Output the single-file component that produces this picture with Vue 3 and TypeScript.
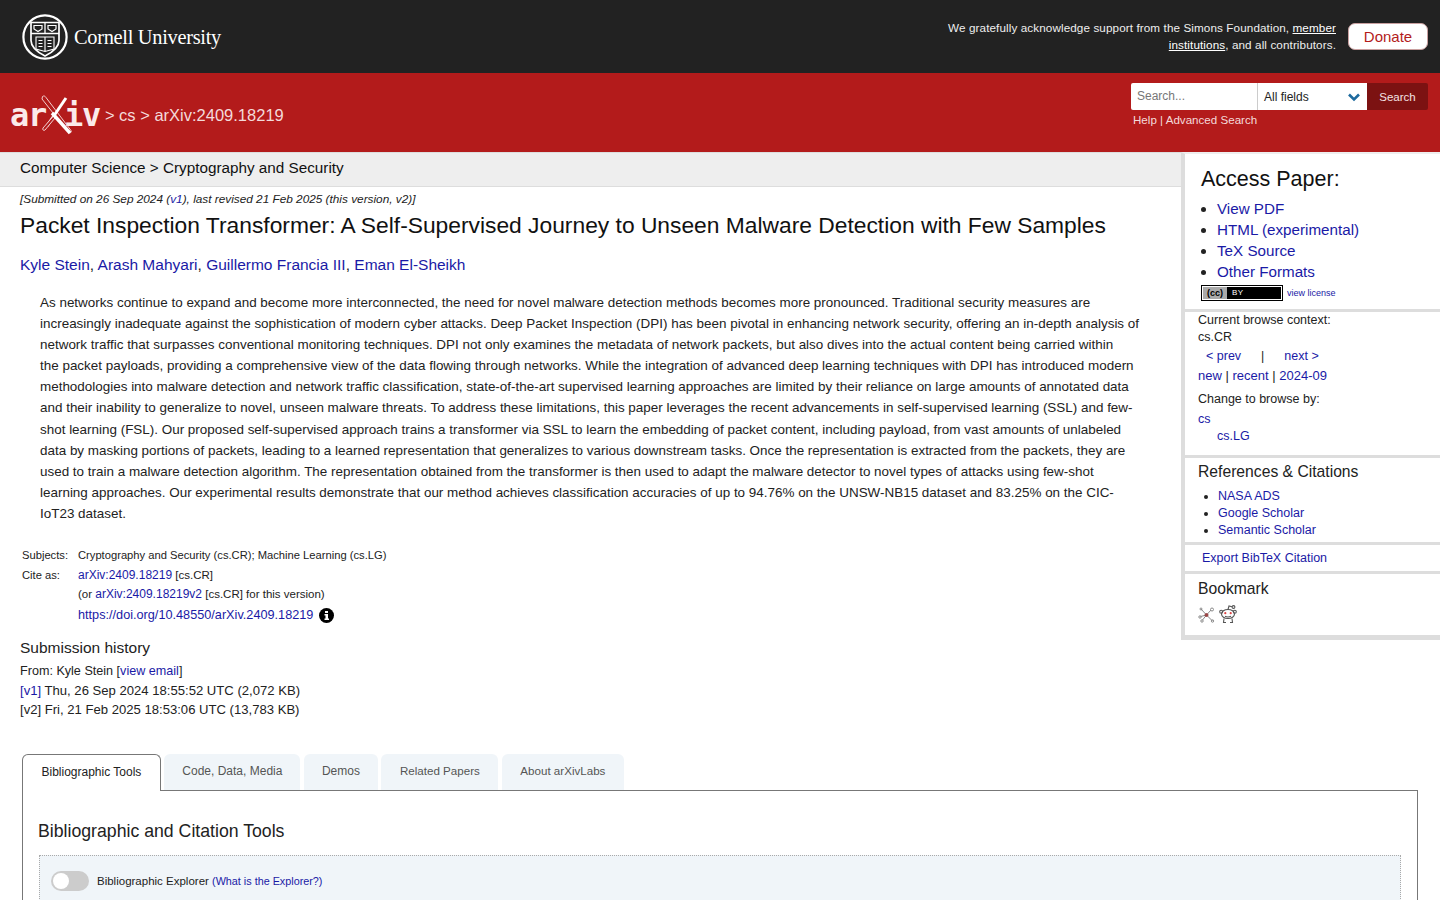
<script setup lang="ts">
const absLines = [
  'As networks continue to expand and become more interconnected, the need for novel malware detection methods becomes more pronounced. Traditional security measures are',
  'increasingly inadequate against the sophistication of modern cyber attacks. Deep Packet Inspection (DPI) has been pivotal in enhancing network security, offering an in-depth analysis of',
  'network traffic that surpasses conventional monitoring techniques. DPI not only examines the metadata of network packets, but also dives into the actual content being carried within',
  'the packet payloads, providing a comprehensive view of the data flowing through networks. While the integration of advanced deep learning techniques with DPI has introduced modern',
  'methodologies into malware detection and network traffic classification, state-of-the-art supervised learning approaches are limited by their reliance on large amounts of annotated data',
  'and their inability to generalize to novel, unseen malware threats. To address these limitations, this paper leverages the recent advancements in self-supervised learning (SSL) and few-',
  'shot learning (FSL). Our proposed self-supervised approach trains a transformer via SSL to learn the embedding of packet content, including payload, from vast amounts of unlabeled',
  'data by masking portions of packets, leading to a learned representation that generalizes to various downstream tasks. Once the representation is extracted from the packets, they are',
  'used to train a malware detection algorithm. The representation obtained from the transformer is then used to adapt the malware detector to novel types of attacks using few-shot',
  'learning approaches. Our experimental results demonstrate that our method achieves classification accuracies of up to 94.76% on the UNSW-NB15 dataset and 83.25% on the CIC-',
  'IoT23 dataset.'
]
const authors = ['Kyle Stein', 'Arash Mahyari', 'Guillermo Francia III', 'Eman El-Sheikh']
const tabs = ['Code, Data, Media', 'Demos', 'Related Papers', 'About arXivLabs']
const accessLinks = ['View PDF', 'HTML (experimental)', 'TeX Source', 'Other Formats']
const refLinks = ['NASA ADS', 'Google Scholar', 'Semantic Scholar']
</script>

<template>
  <div class="page">
    <header class="cornell">
      <div class="cornell-logo">
        <svg width="46" height="46" viewBox="0 0 46 46" fill="none" stroke="#fff">
          <circle cx="23" cy="23" r="21.6" stroke-width="2.2" />
          <path d="M9 8.500h28v18c0 7-6 11.500-14 15.500-8-4-14-8.500-14-15.500z" stroke-width="1.700" />
          <path d="M9 19.500h28M23 8.500v11" stroke-width="1.300" />
          <path d="M12 11.500h8v3.500l-4 2.500-4-2.500zM26 11.500h8v3.500l-4 2.500-4-2.500z" stroke-width="1.200" />
          <path d="M14 23h18v12l-9 2.500-9-2.500zM23 23v14.500M16.500 26.500h4M16.500 29.500h4M16.500 32.500h4M25.500 26.500h4M25.500 29.500h4M25.500 32.500h4" stroke-width="1.100" />
        </svg>
        <span class="cornell-name">Cornell University</span>
      </div>
      <div class="support">
        <p>We gratefully acknowledge support from the Simons Foundation, <a>member<br>institutions</a>, and all contributors.</p>
        <a class="donate">Donate</a>
      </div>
    </header>

    <div class="redbar">
      <div class="crumbs">
        <div class="arxiv-logo">
          <span>ar</span>
          <svg width="34" height="40" viewBox="0 0 34 40" fill="none">
            <path d="M2.500 1.500c1.500-1 2.500-.5 3.500 1l25 33c1 2-1 3-2.500 2L2 4z" stroke="#f3d0d0" stroke-width="1" />
            <path d="M7 31L26 3" stroke="#fff" stroke-width="3" />
            <path d="M3 33c-1 2 1 3 2 2l10-12-1.500-2z" stroke="#f3d0d0" stroke-width="1" fill="#b31b1b" />
            <path d="M12 18l18 20" stroke="#fff" stroke-width="3.400" />
          </svg>
          <span>iv</span>
        </div>
        <span class="crumb-text">&gt; cs &gt; arXiv:2409.18219</span>
      </div>
      <div class="search">
        <div class="search-row">
          <div class="search-input">Search...</div>
          <div class="search-select">
            All fields
            <svg width="14" height="10" viewBox="0 0 14 10" fill="none"><path d="M2 2.500l5 5 5-5" stroke="#1d6a9e" stroke-width="2.600" /></svg>
          </div>
          <div class="search-btn">Search</div>
        </div>
        <div class="search-links">Help | Advanced Search</div>
      </div>
    </div>

    <div class="body-row">
      <main class="main">
        <div class="subject-bar">Computer Science &gt; Cryptography and Security</div>
        <div class="article">
          <div class="dateline">[Submitted on 26 Sep 2024 (<a>v1</a>), last revised 21 Feb 2025 (this version, v2)]</div>
          <h1 class="title">Packet Inspection Transformer: A Self-Supervised Journey to Unseen Malware Detection with Few Samples</h1>
          <div class="authors">
            <template v-for="(a, i) in authors" :key="a"><a>{{ a }}</a><span v-if="i < authors.length - 1">, </span></template>
          </div>
          <blockquote class="abstract">
            <div v-for="l in absLines" :key="l">{{ l }}</div>
          </blockquote>
          <div class="meta">
            <div class="meta-label">Subjects:</div>
            <div>Cryptography and Security (cs.CR); Machine Learning (cs.LG)</div>
            <div class="meta-label">Cite as:</div>
            <div class="cite">
              <div><a>arXiv:2409.18219</a> [cs.CR]</div>
              <div>(or <a>arXiv:2409.18219v2</a> [cs.CR] for this version)</div>
              <div class="doi">
                <a>https://doi.org/10.48550/arXiv.2409.18219</a>
                <svg width="15" height="15" viewBox="0 0 15 15"><circle cx="7.500" cy="7.500" r="7.500" fill="#000" /><path d="M6 3h3v2H6zM5.500 6H9v4.500h1V12H5.500v-1.500h1v-3h-1z" fill="#fff" /></svg>
              </div>
            </div>
          </div>
          <h2 class="history-title">Submission history</h2>
          <div class="history">
            <div class="from">From: Kyle Stein [<a>view email</a>]</div>
            <div><a>[v1]</a> Thu, 26 Sep 2024 18:55:52 UTC (2,072 KB)</div>
            <div>[v2] Fri, 21 Feb 2025 18:53:06 UTC (13,783 KB)</div>
          </div>
        </div>
      </main>

      <aside class="side">
        <section class="access">
          <h2>Access Paper:</h2>
          <ul>
            <li v-for="l in accessLinks" :key="l"><a>{{ l }}</a></li>
          </ul>
          <div class="license">
            <span class="cc"><span class="cc-mark">(cc)</span><span class="cc-by">BY</span></span>
            <a>view license</a>
          </div>
        </section>
        <section class="browse">
          <div>Current browse context:</div>
          <div>cs.CR</div>
          <div class="prevnext"><a>&lt; prev</a><span>|</span><a>next &gt;</a></div>
          <div class="newrow"><a>new</a> | <a>recent</a> | <a>2024-09</a></div>
          <div class="change">Change to browse by:</div>
          <div class="cats"><a>cs</a></div>
          <div class="cats sub"><a>cs.LG</a></div>
        </section>
        <section class="refs">
          <h3>References &amp; Citations</h3>
          <ul>
            <li v-for="l in refLinks" :key="l"><a>{{ l }}</a></li>
          </ul>
        </section>
        <section class="bibtex"><a>Export BibTeX Citation</a></section>
        <section class="bookmark">
          <h3>Bookmark</h3>
          <div class="bm-icons">
            <svg width="17" height="16" viewBox="0 0 17 16" fill="none" stroke="#8a8a8a" stroke-width="1">
              <path d="M3 2l5.500 6L13 3M2.500 9.500L8.500 8l6 6M8.500 8l-4 5" />
              <circle cx="3" cy="2" r="1" /><circle cx="14" cy="2.500" r="1.500" /><circle cx="2" cy="10" r="1.200" /><circle cx="14.500" cy="14" r="1.200" /><circle cx="4" cy="14" r="1.200" />
              <circle cx="8.500" cy="8" r="1.500" fill="#944" stroke="#944" />
            </svg>
            <svg width="18" height="19" viewBox="0 0 18 19" fill="none" stroke="#555" stroke-width="1.100">
              <ellipse cx="9" cy="9" rx="6.500" ry="4.500" />
              <path d="M9 4.500l1-3.500 3 .8" /><circle cx="14.500" cy="2" r="1.400" />
              <circle cx="2.200" cy="6.800" r="1.500" /><circle cx="15.800" cy="6.800" r="1.500" />
              <path d="M5 13.500l-.5 4h2.500M13 13.500l.5 4H11M6 11.300c2 1 4 1 6 0" />
              <circle cx="6.300" cy="8.200" r="1.100" fill="#d44" stroke="none" /><circle cx="11.700" cy="8.200" r="1.100" fill="#d44" stroke="none" />
            </svg>
          </div>
        </section>
      </aside>
    </div>

    <div class="labs">
      <div class="tabs">
        <div class="tab active">Bibliographic Tools</div>
        <div v-for="t in tabs" :key="t" class="tab">{{ t }}</div>
      </div>
      <div class="panel">
        <h2>Bibliographic and Citation Tools</h2>
        <div class="explorer">
          <span class="toggle"><span class="knob"></span></span>
          <span>Bibliographic Explorer <a class="small">(What is the Explorer?)</a></span>
        </div>
      </div>
    </div>
  </div>
</template>

<style>
html, body { margin: 0; background: #fff; }
</style>

<style scoped>
.page {
  height: 900px;
  overflow: hidden;
  font-family: "Liberation Sans", Arial, sans-serif;
  color: #222;
  font-size: 14px;
}
a { color: #1a1aa6; }

.cornell {
  height: 73px;
  background: #222;
  display: flex;
  align-items: center;
  justify-content: space-between;
  padding: 0 12px 0 22px;
  box-sizing: border-box;
}
.cornell-logo { display: flex; align-items: center; gap: 6px; }
.cornell-name {
  font-family: "Liberation Serif", serif;
  color: #fff;
  font-size: 20.400px;
  letter-spacing: -0.3px;
  padding-top: 1px;
}
.support { display: flex; align-items: center; gap: 12px; }
.support p {
  margin: -2px 0 0;
  white-space: nowrap;
  text-align: right;
  color: #eee;
  font-size: 11.700px;
  line-height: 17px;
  letter-spacing: 0.1px;
}
.support a { color: #fff; text-decoration: underline; }
.support .donate {
  width: 78px;
  height: 25px;
  line-height: 25px;
  background: #fff;
  border: 1px solid #c9a0a0;
  border-radius: 7px;
  text-align: center;
  color: #b31b1b;
  font-size: 15px;
  text-decoration: none;
}

.redbar {
  height: 79px;
  background: #b31b1b;
  display: flex;
  justify-content: space-between;
  padding: 10px 12px 0 10px;
  box-sizing: border-box;
}
.crumbs { display: flex; align-items: center; height: 63px; gap: 5px; color: #f3dada; font-size: 16.500px; }
.crumb-text { padding-top: 2px; }
.arxiv-logo {
  display: flex;
  align-items: center;
  font-family: "DejaVu Sans Mono", monospace;
  font-weight: 700;
  font-size: 32px;
  letter-spacing: -1.300px;
  color: #fbeaea;
}
.arxiv-logo svg { margin: 0 -10px 0 -6px; position: relative; z-index: 1; }
.search-row { display: flex; height: 27px; }
.search-input {
  width: 126px;
  background: #fff;
  color: #777;
  font-size: 12px;
  line-height: 27px;
  padding-left: 6px;
  box-sizing: border-box;
  border-radius: 2px 0 0 2px;
}
.search-select {
  width: 110px;
  background: #fff;
  border-left: 1px solid #ccc;
  color: #222;
  font-size: 12px;
  display: flex;
  align-items: center;
  justify-content: space-between;
  padding: 0 6px;
  box-sizing: border-box;
}
.search-btn {
  width: 61px;
  background: #7c1212;
  color: #f3e3e3;
  font-size: 11.500px;
  line-height: 29px;
  text-align: center;
  border-radius: 0 2px 2px 0;
}
.search-links { color: #f3dada; font-size: 11.600px; margin-top: 3px; padding-left: 2px; }

.body-row { display: flex; align-items: flex-start; }
.main { width: 1181px; flex: none; }
.subject-bar {
  height: 35px;
  line-height: 29px;
  background: #eee;
  border-top: 1px solid #ddd;
  border-bottom: 1px solid #ddd;
  padding-left: 20px;
  box-sizing: border-box;
  font-size: 15.270px;
  color: #111;
}
.article { padding: 0 20px; }
.dateline { font-style: italic; font-size: 11.800px; margin-top: 6px; line-height: 13px; }
.title { font-size: 22.800px; font-weight: 400; color: #111; margin: 2px 0 0; line-height: 34px; white-space: nowrap; }
.authors { font-size: 15.500px; margin-top: 12px; line-height: 22px; }
.abstract { margin: 16px 0 0 20px; font-size: 13.440px; line-height: 21.100px; white-space: nowrap; color: #222; }
.meta {
  display: grid;
  grid-template-columns: 56px 1fr;
  margin: 22px 0 0 2px;
  font-size: 11.200px;
  line-height: 19.500px;
  color: #222;
}
.cite { font-size: 11.500px; }
.cite a { font-size: 12px; }
.doi { display: flex; align-items: center; gap: 6px; height: 22px; }
.cite .doi a { font-size: 12.700px; }
.history-title { font-size: 15.500px; font-weight: 400; margin: 11px 0 0; line-height: 20px; color: #222; }
.history { font-size: 13.100px; line-height: 19.400px; margin-top: 4px; }
.from { font-size: 12.600px; }

.side {
  width: 259px;
  flex: none;
  border-left: 4px solid #ddd;
  border-bottom: 5px solid #ddd;
  border-top: 2px solid #eee;
  box-sizing: border-box;
  font-size: 13px;
}
.side section { border-bottom: 3px solid #ddd; padding-left: 13px; box-sizing: border-box; }
.side section:last-child { border-bottom: 0; }
.side ul { margin: 0; padding: 0; }
.access { height: 158px; padding-top: 10px; }
.access h2 { font-size: 21.500px; font-weight: 400; margin: 0 0 0 3px; line-height: 30px; color: #111; }
.side .access ul { margin-top: 4px; padding-left: 19px; font-size: 15.200px; line-height: 21px; }
.license { display: flex; align-items: center; gap: 5px; margin: 4px 0 0 4px; font-size: 9px; }
.cc {
  width: 80px;
  height: 14px;
  box-sizing: border-box;
  background: #000;
  outline: 1px solid #000;
  border: 1px solid #fff;
  display: flex;
  align-items: center;
  color: #fff;
  font-size: 8px;
  line-height: 12px;
}
.cc-mark { background: #aaa; color: #000; width: 24px; text-align: center; font-weight: 700; font-size: 9px; height: 12px; line-height: 12px; }
.cc-by { margin-left: 5px; letter-spacing: 0.5px; }
.browse { height: 146px; line-height: 17px; color: #222; font-size: 12.500px; }
.prevnext { display: flex; gap: 20px; margin: 2px 0 0 8px; }
.newrow { margin-top: 2px; font-size: 13px; }
.change { margin-top: 7px; }
.cats { margin-top: 3px; line-height: 16px; }
.cats.sub { padding-left: 19px; margin-top: 1px; }
.refs { height: 87px; padding-top: 2px; }
.refs h3, .bookmark h3 { font-size: 15.700px; font-weight: 400; margin: 0; line-height: 24px; color: #222; }
.side .refs ul { padding-left: 20px; margin-top: 4px; font-size: 12.500px; line-height: 17px; }
.side .bibtex { height: 29px; line-height: 26px; font-size: 12.500px; padding-left: 17px; }
.bookmark { height: 61px; padding-top: 3px; }
.bm-icons { display: flex; align-items: center; gap: 4px; margin-top: 4px; }

.labs { margin: 34px 22px 0; }
.tabs { display: flex; gap: 3.500px; }
.tab {
  height: 36px;
  line-height: 34px;
  padding: 0 18px;
  background: #f0f5f9;
  border-radius: 6px 6px 0 0;
  color: #555;
  font-size: 12px;
  box-sizing: border-box;
}
.tab:nth-child(n + 4) { font-size: 11.600px; padding: 0 18.500px; }
.tab.active {
  background: #fff;
  border: 1px solid #777;
  border-bottom: 0;
  height: 37px;
  line-height: 35px;
  padding: 0 18.500px;
  color: #222;
  margin-bottom: -1px;
  position: relative;
  z-index: 1;
}
.panel { border: 1px solid #777; padding: 0 16px; height: 200px; }
.panel h2 { font-size: 17.700px; font-weight: 400; margin: 28px 0 0 -1px; line-height: 24px; color: #222; }
.explorer {
  margin-top: 12px;
  background: #f0f5f9;
  border: 1px dotted #aaa;
  height: 90px;
  padding: 15px 11px;
  box-sizing: border-box;
  display: flex;
  align-items: flex-start;
  gap: 8px;
  font-size: 11.500px;
  line-height: 20px;
  color: #222;
}
.small { font-size: 10.800px; }
.toggle { width: 38px; height: 20px; border-radius: 10px; background: #ccc; display: block; padding: 2px; box-sizing: border-box; }
.knob { display: block; width: 16px; height: 16px; border-radius: 50%; background: #fff; }
</style>
